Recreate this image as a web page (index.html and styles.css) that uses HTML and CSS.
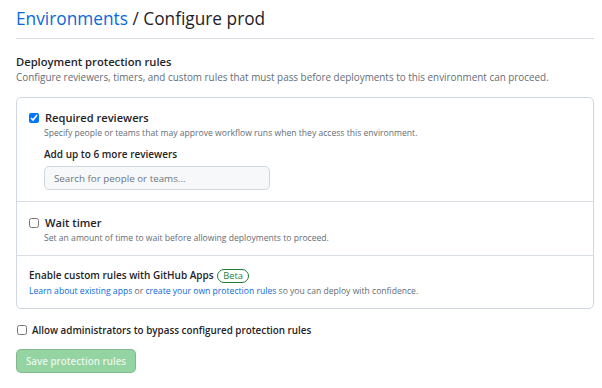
FILE: index.html
```html
<!DOCTYPE html>
<html lang="en">
<head>
  <meta charset="UTF-8" />
  <title>Configure prod</title>
  <link rel="stylesheet" href="styles.css">
</head>
<body>

  <!-- Titulo -->
  <div class="page-head">
    <h2><a href="#">Environments</a> / Configure prod</h2>
  </div>

  <div class="section-title">Deployment protection rules</div>
  <p class="section-desc">Configure reviewers, timers, and custom rules that must pass before deployments to this environment can proceed.</p>

  <div class="rules-box">
    <div class="rule">
      <label class="check-row">
        <input type="checkbox" checked>
        <span class="rule-name">Required reviewers</span>
      </label>
      <p class="rule-note">Specify people or teams that may approve workflow runs when they access this environment.</p>
      <div class="reviewers">
        <div class="reviewers-title">Add up to 6 more reviewers</div>
        <input class="search" type="text" placeholder="Search for people or teams...">
      </div>
    </div>

    <div class="rule rule-timer">
      <label class="check-row">
        <input type="checkbox">
        <span class="rule-name">Wait timer</span>
      </label>
      <p class="rule-note">Set an amount of time to wait before allowing deployments to proceed.</p>
    </div>

    <div class="rule rule-apps">
      <div class="apps-title">Enable custom rules with GitHub Apps <span class="beta">Beta</span></div>
      <p class="apps-note"><a href="#">Learn about existing apps</a> or <a href="#">create your own protection rules</a> so you can deploy with confidence.</p>
    </div>
  </div>

  <label class="check-row admin-row">
    <input type="checkbox">
    <span>Allow administrators to bypass configured protection rules</span>
  </label>

  <button class="save-btn" disabled>Save protection rules</button>

</body>
</html>
```

FILE: styles.css
```css
body {
  margin: 0;
  padding: 0 8px 0 16px;
  font-family: 'Open Sans', 'Noto Sans', sans-serif;
  color: #1f2328;
  background: #fff;
  font-size: 10px;
}

a {
  color: #0969da;
  text-decoration: none;
}

.page-head {
  border-bottom: 1px solid #d8dee4;
  margin-bottom: 15px;
}

.page-head h2 {
  margin: 0;
  padding: 6px 0 7px;
  font-size: 17.3px;
  font-weight: 400;
  line-height: 25px;
}

.section-title {
  font-size: 11.2px;
  font-weight: 600;
  line-height: 16px;
}

.section-desc {
  margin: 0 0 12px;
  color: #656d76;
  font-size: 9.9px;
  line-height: 15px;
}

.rules-box {
  border: 1px solid #d0d7de;
  border-radius: 5px;
}

.rule {
  padding: 12px 12px 11px;
  border-top: 1px solid #d8dee4;
}

.rule:first-child {
  border-top: none;
}

.check-row {
  display: flex;
  align-items: center;
  gap: 6px;
}

.check-row input {
  margin: 0;
  width: 10px;
  height: 10px;
}

.rule-name {
  font-size: 11.1px;
  font-weight: 600;
  line-height: 16px;
}

.rule-note {
  margin: 0 0 0 15px;
  color: #656d76;
  font-size: 8.6px;
  line-height: 14px;
}

.reviewers {
  margin: 6px 0 0 15px;
}

.reviewers-title {
  font-size: 10px;
  font-weight: 600;
  line-height: 16px;
  margin-bottom: 4px;
}

.search {
  display: block;
  box-sizing: border-box;
  width: 226px;
  height: 24px;
  padding: 0 9px;
  border: 1px solid #d0d7de;
  border-radius: 5px;
  background: #f6f8fa;
  font-family: inherit;
  font-size: 9.8px;
  color: #1f2328;
}

.search::placeholder {
  color: #6e7781;
}

.rule-timer {
  padding: 13px 12px 10px;
}

.rule-apps {
  padding: 11px 12px 10px;
}

.apps-title {
  font-size: 10px;
  font-weight: 600;
  line-height: 17px;
}

.beta {
  display: inline-block;
  margin-left: 1px;
  padding: 0 5px;
  border: 1px solid #1a7f37;
  border-radius: 10px;
  color: #1a7f37;
  font-size: 9.3px;
  font-weight: 500;
  line-height: 12px;
}

.apps-note {
  margin: 0;
  color: #656d76;
  font-size: 8.6px;
  line-height: 14px;
}

.admin-row {
  margin: 13px 0 11px 1px;
  gap: 5px;
  font-size: 9.85px;
  font-weight: 600;
  line-height: 16px;
}

.save-btn {
  width: 120px;
  height: 24px;
  padding: 0;
  border: 1px solid rgba(31, 35, 40, 0.15);
  border-radius: 5px;
  background: #94d3a2;
  color: rgba(255, 255, 255, 0.8);
  font-family: inherit;
  font-size: 9.8px;
  font-weight: 600;
}
```
